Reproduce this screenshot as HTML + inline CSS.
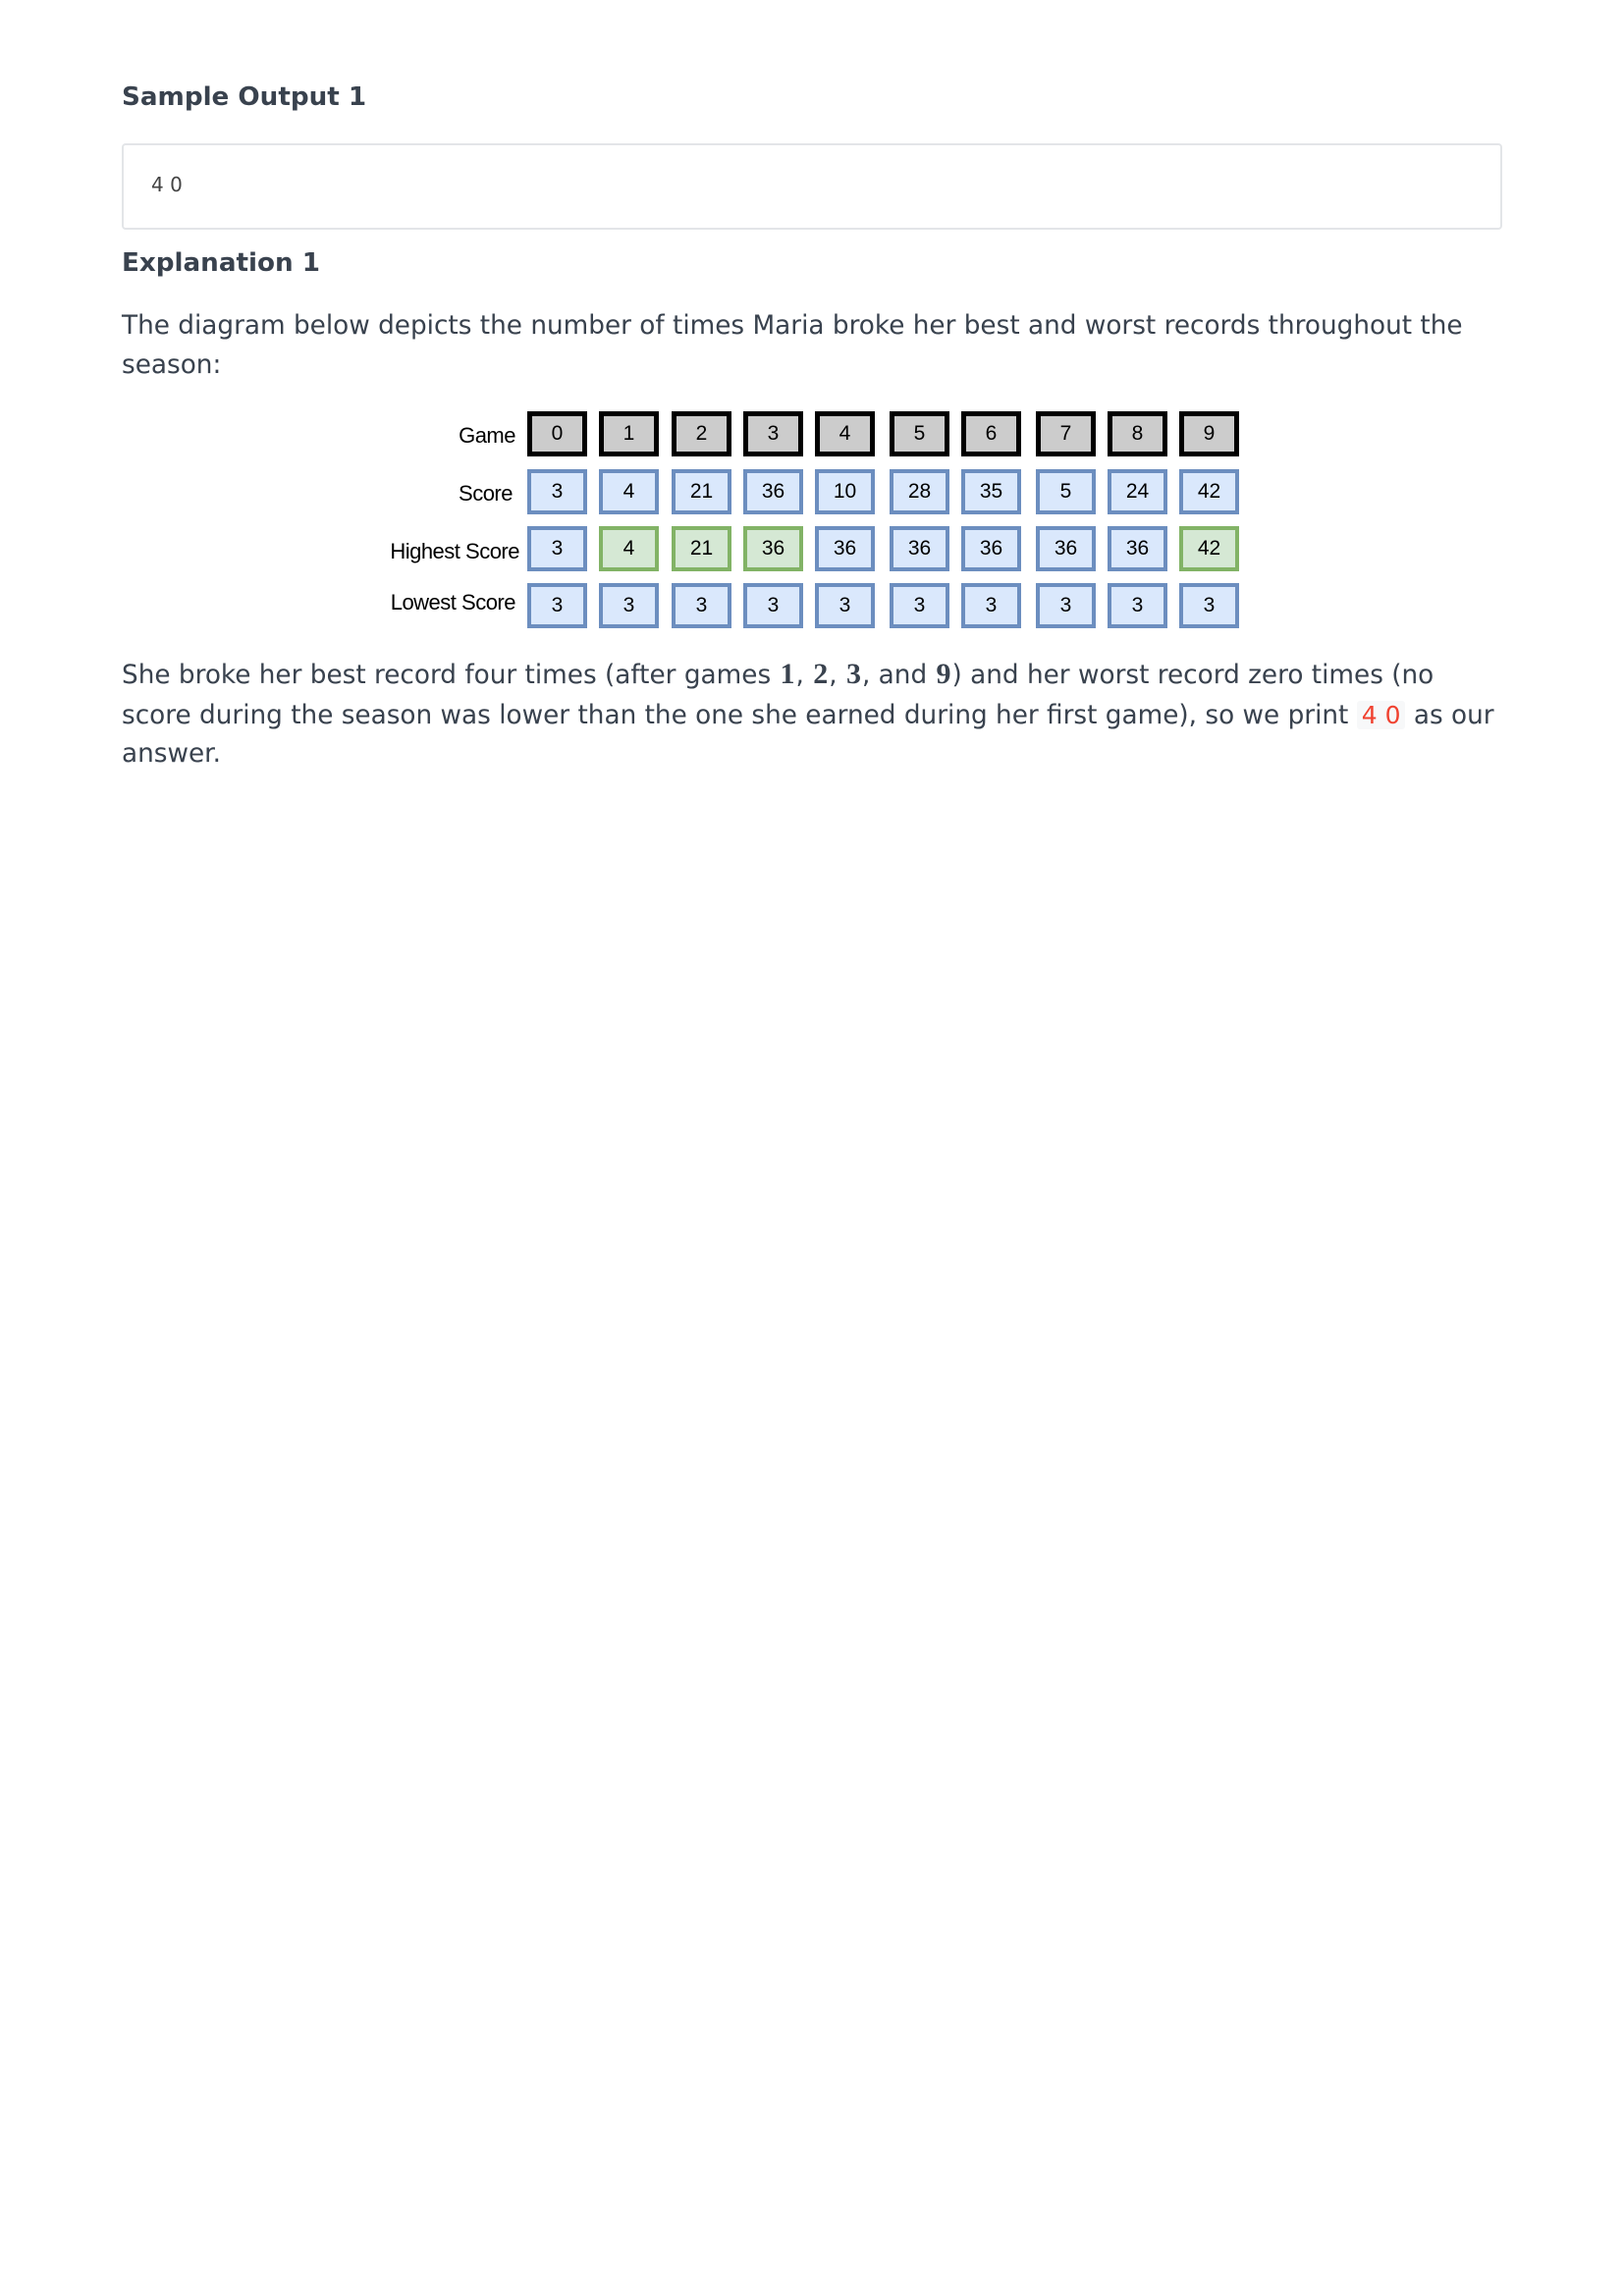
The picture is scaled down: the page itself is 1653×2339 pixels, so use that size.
<!DOCTYPE html>
<html><head><meta charset="utf-8">
<style>
html,body{margin:0;padding:0;background:#fff;}
body{width:1653px;height:2339px;position:relative;font-family:"DejaVu Sans","Liberation Sans",sans-serif;color:#39424e;}
.h{position:absolute;left:124px;font-weight:bold;font-size:26.2px;margin:0;line-height:30px;}
.code{position:absolute;left:124px;top:146px;width:1402px;height:84px;border:2px solid #e3e5e8;border-radius:4px;}
.code span{position:absolute;left:28px;top:28px;font-family:"DejaVu Sans","Liberation Sans",sans-serif;font-size:20px;color:#444;}
.p{position:absolute;left:124px;width:1440px;font-size:26.3px;line-height:40px;margin:0;white-space:nowrap;}
.m{font-family:"Liberation Serif","DejaVu Serif",serif;font-size:30px;font-weight:bold;padding:0 1px;}
.ic{color:#f0412f;background:#f7f8f9;font-family:"DejaVu Sans",sans-serif;font-size:25px;padding:0 5px;border-radius:3px;}
.lab{position:absolute;font-family:"Liberation Sans",Arial,sans-serif;font-size:22px;color:#000;text-align:right;width:220px;letter-spacing:-0.5px;}
.b{position:absolute;width:61px;height:46px;box-sizing:border-box;font-family:"Liberation Sans",Arial,sans-serif;font-size:21px;color:#000;display:flex;align-items:center;justify-content:center;}
.g{background:#cccccc;border:5px solid #000;}
.bl{background:#dae8fc;border:4px solid #6c8ebf;}
.gr{background:#d5e8d4;border:4px solid #82b366;}
</style></head><body>
<div class="h" style="top:84px">Sample Output 1</div>
<div class="code"><span>4 0</span></div>
<div class="h" style="top:253px">Explanation 1</div>
<p class="p" style="top:312px">The diagram below depicts the number of times Maria broke her best and worst records throughout the<br>season:</p>

<div class="lab" style="left:305px;top:431px">Game</div>
<div class="lab" style="left:302px;top:490px">Score</div>
<div class="lab" style="left:309px;top:549px">Highest Score</div>
<div class="lab" style="left:305px;top:601px">Lowest Score</div>

<div id="d"></div>
<script>
var xs=[537,610,684,757,830,906,979,1055,1128,1201];
var ys=[419,478,536,594];
var rows=[["0","1","2","3","4","5","6","7","8","9"],["3","4","21","36","10","28","35","5","24","42"],["3","4","21","36","36","36","36","36","36","42"],["3","3","3","3","3","3","3","3","3","3"]];
var h="";
for(var r=0;r<4;r++)for(var i=0;i<10;i++){
 var c=r==0?"g":(r==2&&(i==1||i==2||i==3||i==9)?"gr":"bl");
 h+='<div class="b '+c+'" style="left:'+xs[i]+'px;top:'+ys[r]+'px">'+rows[r][i]+'</div>';
}
document.getElementById("d").innerHTML=h;
</script>

<p class="p" style="top:667px;line-height:39.5px">She broke her best record four times (after games <span class="m">1</span>, <span class="m">2</span>, <span class="m">3</span>, and <span class="m">9</span>) and her worst record zero times (no<br>score during the season was lower than the one she earned during her first game), so we print <span class="ic">4 0</span> as our<br>answer.</p>
</body></html>
